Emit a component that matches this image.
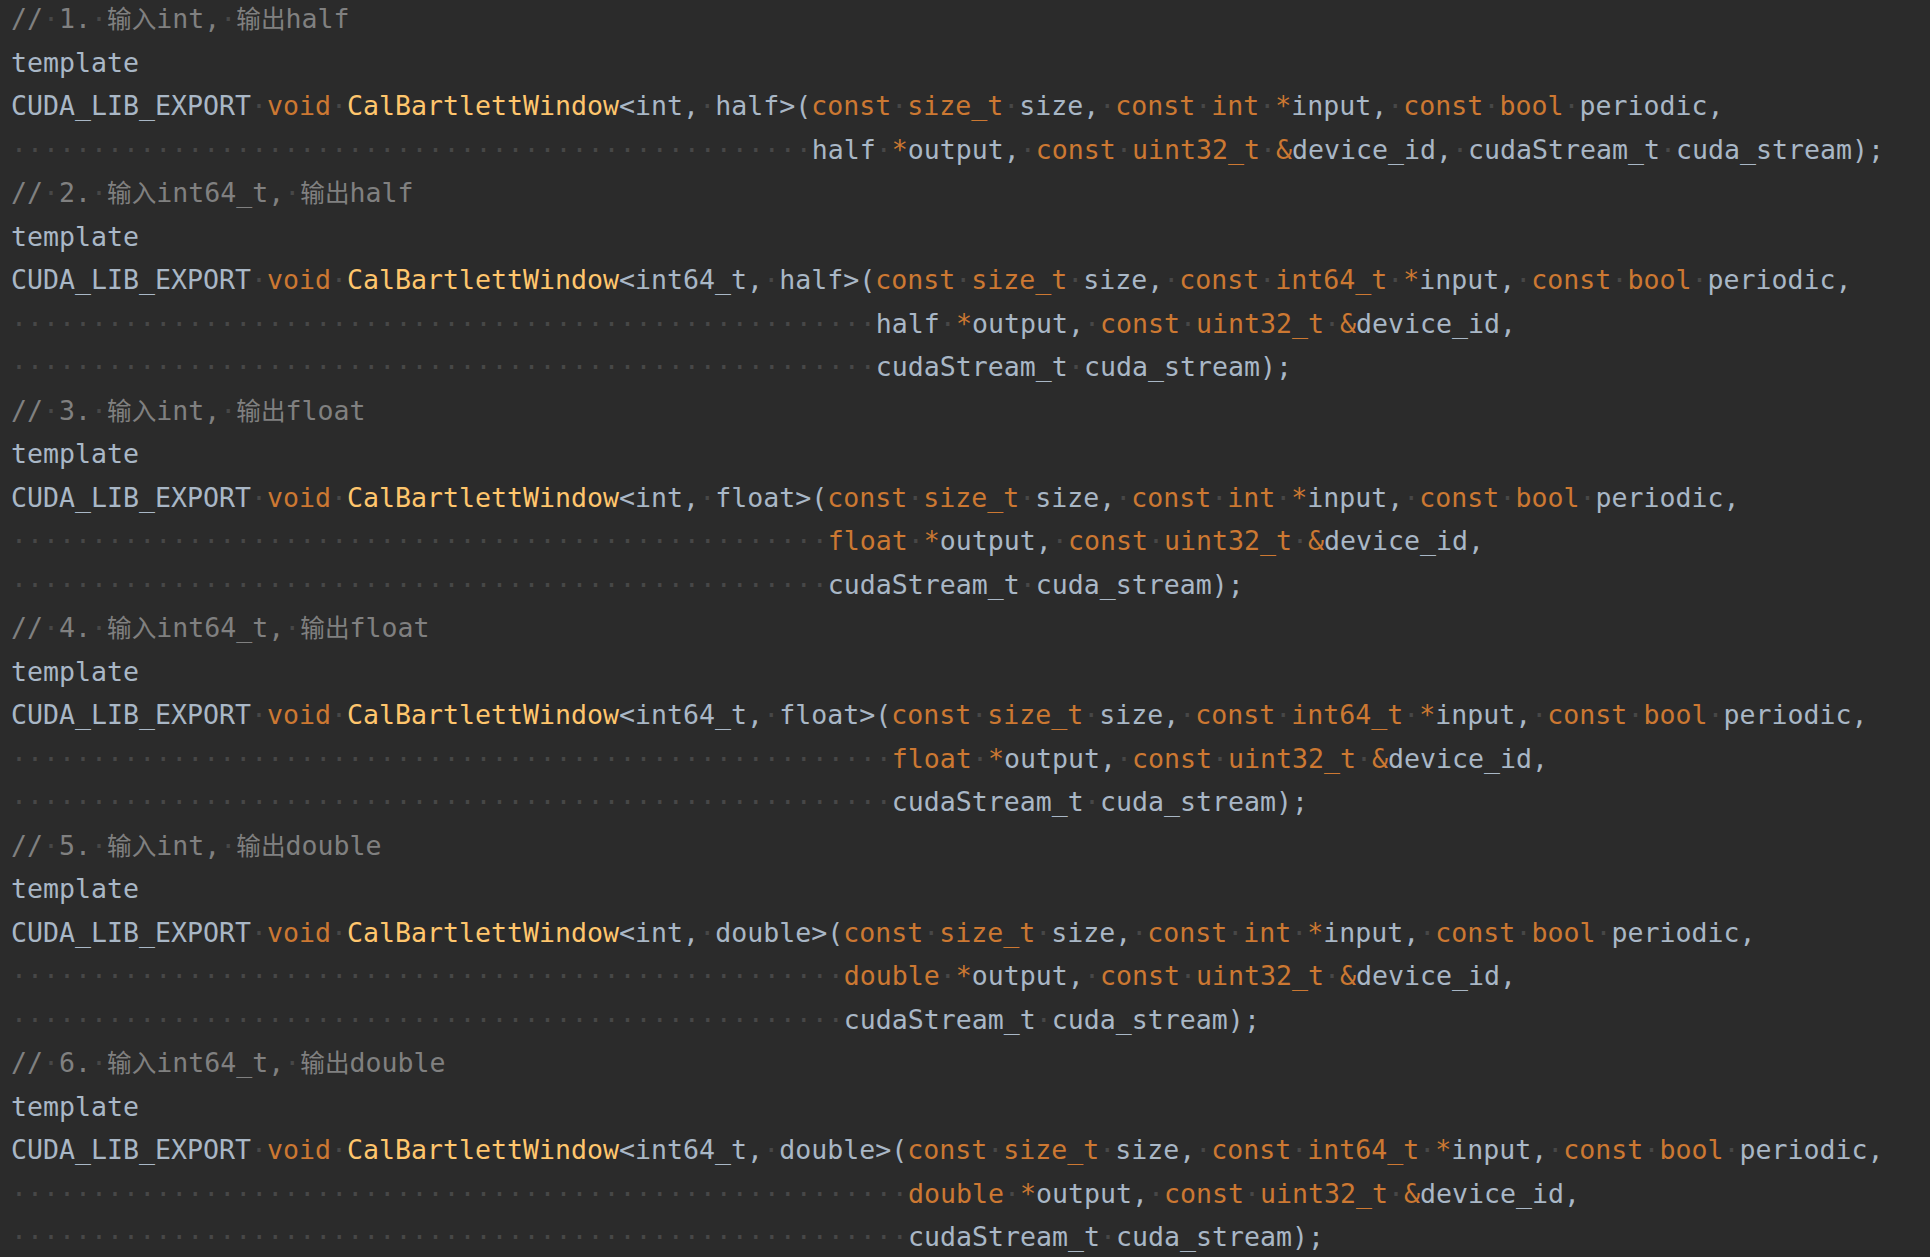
import React from "react";

type Tok = { t: string; c: string };

const D = "text-[#a9b7c6]";
const K = "text-[#cc7832]";
const F = "text-[#ffc66d]";
const C = "text-[#808080]";
const CJ = "text-[#808080] text-[24.6px]";

const d = (t: string): Tok => ({ t, c: D });
const k = (t: string): Tok => ({ t, c: K });
const f = (t: string): Tok => ({ t, c: F });
const cm = (t: string): Tok => ({ t, c: C });
const cj = (t: string): Tok => ({ t, c: CJ });

// spaces are shown as dim dots, like the IDE's "show whitespace" option
function Segment({ tok }: { tok: Tok }) {
  const parts = tok.t.split(" ");
  return (
    <span className={tok.c}>
      {parts.map((p, i) => (
        <React.Fragment key={i}>
          {i > 0 && <span className="text-[#474747]">·</span>}
          {p}
        </React.Fragment>
      ))}
    </span>
  );
}

function Line({ toks }: { toks: Tok[] }) {
  return (
    <div className="h-[43.5px] leading-[43.5px] whitespace-pre">
      {toks.map((tok, i) => (
        <Segment key={i} tok={tok} />
      ))}
    </div>
  );
}

function block(n: number, inT: string, outT: string, oneLine: boolean): Tok[][] {
  const head = `CUDA_LIB_EXPORT void CalBartlettWindow<${inT}, ${outT}>(`;
  const pad = " ".repeat(head.length);
  const outTok = outT === "half" ? d("half ") : k(outT);
  const lines: Tok[][] = [
    [cm(`// ${n}. `), cj("输入"), cm(`${inT}, `), cj("输出"), cm(outT)],
    [d("template")],
    [
      d("CUDA_LIB_EXPORT "),
      k("void"),
      d(" "),
      f("CalBartlettWindow"),
      d(`<${inT}, ${outT}>(`),
      k("const size_t"),
      d(" size, "),
      k(`const ${inT} *`),
      d("input, "),
      k("const bool"),
      d(" periodic,"),
    ],
  ];
  const second: Tok[] = [d(pad), outTok];
  if (outT !== "half") second.push(d(" "));
  second.push(k("*"), d("output, "), k("const uint32_t &"), d("device_id,"));
  if (oneLine) {
    second.push(d(" cudaStream_t cuda_stream);"));
    lines.push(second);
  } else {
    lines.push(second);
    lines.push([d(pad + "cudaStream_t cuda_stream);")]);
  }
  return lines;
}

const code: Tok[][] = [
  ...block(1, "int", "half", true),
  ...block(2, "int64_t", "half", false),
  ...block(3, "int", "float", false),
  ...block(4, "int64_t", "float", false),
  ...block(5, "int", "double", false),
  ...block(6, "int64_t", "double", false),
];

export default function App() {
  return (
    <div className="w-[1930px] h-[1257px] overflow-hidden bg-[#2b2b2b] pl-[11px] font-['DejaVu_Sans_Mono','Noto_Sans_CJK_SC',monospace] text-[26.58px]">
      <div className="-mt-[3px]">
        {code.map((toks, i) => (
          <Line key={i} toks={toks} />
        ))}
      </div>
    </div>
  );
}
